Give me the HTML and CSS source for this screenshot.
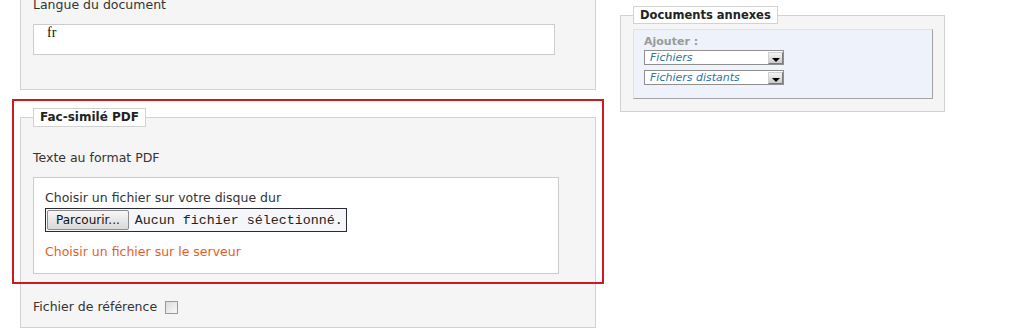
FILE: index.html
```html
<!DOCTYPE html>
<html>
<head>
    <title>Document - fichiers</title>
    <link rel="stylesheet" href="styles.css">
</head>
<body>
    <div class="page">
        <div class="col-main">
            <div class="panel panel-top">
                <div class="field-label">Langue du document</div>
                <div class="text-input">fr</div>
            </div>

            <fieldset class="panel">
                <legend>Fac-similé PDF</legend>
                <div class="field-label">Texte au format PDF</div>
                <div class="upload">
                    <div class="upload-label">Choisir un fichier sur votre disque dur</div>
                    <div class="file-input">
                        <span class="file-btn">Parcourir...</span>
                        <span class="file-name">Aucun fichier sélectionné.</span>
                    </div>
                    <a class="server-link">Choisir un fichier sur le serveur</a>
                </div>
                <div class="check-row">
                    <span>Fichier de référence</span>
                    <span class="checkbox"></span>
                </div>
            </fieldset>

            <div class="highlight"></div>
        </div>

        <div class="col-side">
            <fieldset class="panel annexes">
                <legend>Documents annexes</legend>
                <div class="annexes-inner">
                    <div class="add-label">Ajouter :</div>
                    <div class="select">
                        <span>Fichiers</span>
                        <span class="select-arrow"></span>
                    </div>
                    <div class="select">
                        <span>Fichiers distants</span>
                        <span class="select-arrow"></span>
                    </div>
                </div>
            </fieldset>
        </div>
    </div>
</body>
</html>
```

FILE: styles.css
```css
body {
    margin: 0;
    background-color: #ffffff;
    font-family: "DejaVu Sans", Verdana, sans-serif;
    font-size: 12.5px;
    color: #333333;
}
.page {
    display: flex;
    align-items: flex-start;
    gap: 24px;
    padding-left: 20px;
}
.col-main {
    position: relative;
    width: 576px;
}
.col-side {
    width: 325px;
}
.panel {
    margin: 0;
    min-width: 0;
    background-color: #f5f5f5;
    border: 1px solid #d2d2d2;
}
.panel legend {
    background-color: #ffffff;
    border: 1px solid #d2d2d2;
    font-size: 12px;
    font-weight: bold;
    color: #222222;
}

/* bloc du haut, coupé par le bord de la fenêtre */
.panel-top {
    margin-top: -12px;
    padding: 8px 12px 34px 12px;
}
.field-label {
    line-height: 16px;
}
.text-input {
    margin-top: 11px;
    height: 29px;
    width: 494px;
    padding: 0 13px;
    background-color: #ffffff;
    border: 1px solid #cccccc;
    font-family: "Liberation Serif", "Times New Roman", serif;
    font-size: 14px;
    line-height: 16px;
    color: #111111;
}

/* Fac-similé PDF */
fieldset.panel {
    margin-top: 18px;
    padding: 23px 12px 12px 12px;
}
fieldset.panel legend {
    padding: 1px 6px;
    line-height: 15px;
}
.upload {
    margin-top: 11px;
    width: 502px;
    padding: 12px 11px 13px 11px;
    background-color: #ffffff;
    border: 1px solid #cccccc;
}
.upload-label {
    line-height: 16px;
}
.file-input {
    display: flex;
    align-items: center;
    gap: 6px;
    margin-top: 2px;
    width: 299px;
    height: 22px;
    padding-left: 1px;
    background-color: #f4f6fa;
    border: 1px solid #2b2b33;
}
.file-btn {
    height: 18px;
    padding: 0 8px;
    border: 1px solid #8c8c8c;
    border-radius: 2px;
    background: linear-gradient(#f6f6f6, #d9d9d9);
    font-size: 12px;
    line-height: 18px;
    color: #111111;
}
.file-name {
    font-family: "Liberation Mono", "Courier New", monospace;
    font-size: 13.33px;
    color: #222222;
}
.server-link {
    display: block;
    margin-top: 12px;
    line-height: 16px;
    color: #e45f1e;
    cursor: pointer;
}
.check-row {
    display: flex;
    align-items: center;
    gap: 8px;
    margin-top: 25px;
    line-height: 16px;
}
.checkbox {
    width: 11px;
    height: 11px;
    border: 1px solid #9a9a9a;
    background: linear-gradient(135deg, #dcdcdc, #f8f8f8);
}

/* cadre rouge de mise en évidence */
.highlight {
    position: absolute;
    left: -8px;
    top: 99px;
    width: 592px;
    height: 185px;
    box-sizing: border-box;
    border: 2px solid #d0191e;
    pointer-events: none;
}

/* Documents annexes */
fieldset.annexes {
    margin-top: 6px;
    padding: 5px 11px 12px 12px;
}
fieldset.annexes legend {
    padding: 1px 6px;
    line-height: 14px;
    font-size: 11.5px;
}
.annexes-inner {
    padding: 5px 10px 13px 10px;
    background-color: #eef2fa;
    border: 1px solid #dde1ea;
    border-right-color: #a3a3a3;
    border-bottom-color: #a3a3a3;
}
.add-label {
    font-size: 11px;
    font-weight: bold;
    line-height: 13px;
    color: #9a9a9a;
}
.select {
    display: flex;
    align-items: center;
    justify-content: space-between;
    width: 138px;
    height: 13px;
    margin-top: 2px;
    background-color: #ffffff;
    border: 1px solid #8f8f8f;
    font-size: 11px;
    font-style: italic;
    color: #2c74a6;
}
.select + .select {
    margin-top: 5px;
}
.select span:first-child {
    padding-left: 5px;
}
.select-arrow {
    position: relative;
    width: 15px;
    height: 12px;
    margin-right: 0;
    border: 1px solid #7a7a7a;
    border-left-color: #d0d0d0;
    border-top-color: #d0d0d0;
    background: linear-gradient(#f4f4f4, #cbcbcb);
    box-sizing: border-box;
}
.select-arrow::after {
    content: "";
    position: absolute;
    left: 3px;
    bottom: 1px;
    border-left: 4px solid transparent;
    border-right: 4px solid transparent;
    border-top: 4px solid #000000;
}
```
